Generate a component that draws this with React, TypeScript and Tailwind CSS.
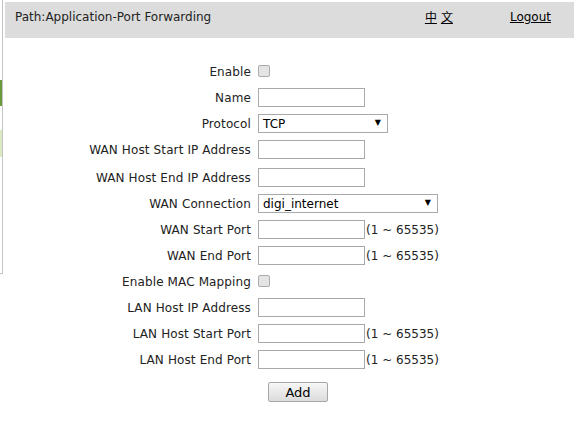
import type { ReactNode } from "react"

const font = { fontFamily: '"DejaVu Sans", Verdana, sans-serif' }

function Row({ label, children, className = "" }: { label: string; children: ReactNode; className?: string }) {
  return (
    <div className={`grid grid-cols-[246px_1fr] gap-x-[7px] h-[26px] items-center ${className}`}>
      <div className="text-right whitespace-nowrap tracking-[0.12px] pt-[2px]">{label}</div>
      <div className="flex items-center">{children}</div>
    </div>
  )
}

function TextBox() {
  return <div className="w-[107px] h-[19px] border border-[#a9a9a9] bg-white" />
}

function Check() {
  return <div className="w-[12px] h-[12px] rounded-[2px] border border-[#ababab] bg-[#e4e4e4]" />
}

function Select({ value, width }: { value: string; width: string }) {
  return (
    <div className={`${width} h-[19px] border border-[#a9a9a9] bg-white flex items-center justify-between pl-[4px] pr-[6px]`}>
      <span className="text-[12px] leading-none text-black pt-[1px]">{value}</span>
      <span className="text-[8px] leading-none text-black">▼</span>
    </div>
  )
}

function PortBox() {
  return (
    <>
      <TextBox />
      <span className="ml-[1px] whitespace-nowrap pt-[2px]">(1 ~ 65535)</span>
    </>
  )
}

export default function App() {
  return (
    <div className="w-[574px] h-[421px] bg-white overflow-hidden flex text-[12px] text-[#222]" style={font}>
      {/* left frame edge */}
      <div className="w-[3px] h-[274px] border-r border-b border-[#c4c4c4] flex flex-col shrink-0">
        <div className="h-[80px]" />
        <div className="h-[26px] w-[2px] bg-[#6a9a3c]" />
        <div className="h-[24px]" />
        <div className="h-[27px] w-[2px] bg-[#dbe9c3]" />
      </div>

      <div className="flex-1 ml-[2px] flex flex-col">
        <div className="mt-[2px] h-[36px] bg-[#dcdcdc] flex items-start pt-[8px] pl-[10px] pr-[23px]">
          <span className="flex-1 leading-[14px]">Path:Application-Port Forwarding</span>
          <span
            className="underline leading-[14px] text-black"
            style={{ fontFamily: '"Noto Sans CJK SC", "DejaVu Sans", sans-serif' }}
          >
            中<span className="inline-block w-[4px]"> </span>文
          </span>
          <span className="ml-[57px] underline leading-[14px] text-black">Logout</span>
        </div>

        <div className="mt-[20px] flex flex-col">
          <Row label="Enable">
            <Check />
          </Row>
          <Row label="Name">
            <TextBox />
          </Row>
          <Row label="Protocol">
            <Select value="TCP" width="w-[130px]" />
          </Row>
          <Row label="WAN Host Start IP Address">
            <TextBox />
          </Row>
          <Row label="WAN Host End IP Address" className="mt-[2px]">
            <TextBox />
          </Row>
          <Row label="WAN Connection">
            <Select value="digi_internet" width="w-[180px]" />
          </Row>
          <Row label="WAN Start Port">
            <PortBox />
          </Row>
          <Row label="WAN End Port">
            <PortBox />
          </Row>
          <Row label="Enable MAC Mapping">
            <Check />
          </Row>
          <Row label="LAN Host IP Address">
            <TextBox />
          </Row>
          <Row label="LAN Host Start Port">
            <PortBox />
          </Row>
          <Row label="LAN Host End Port">
            <PortBox />
          </Row>

          <div className="grid grid-cols-[246px_1fr] gap-x-[7px] mt-[10px]">
            <div />
            <div>
              <button className="ml-[10px] w-[60px] h-[20px] border border-[#a7a7a7] rounded-[2px] bg-gradient-to-b from-[#f7f7f7] to-[#dcdcdc] text-[13px] leading-none text-black">
                Add
              </button>
            </div>
          </div>
        </div>
      </div>
    </div>
  )
}
